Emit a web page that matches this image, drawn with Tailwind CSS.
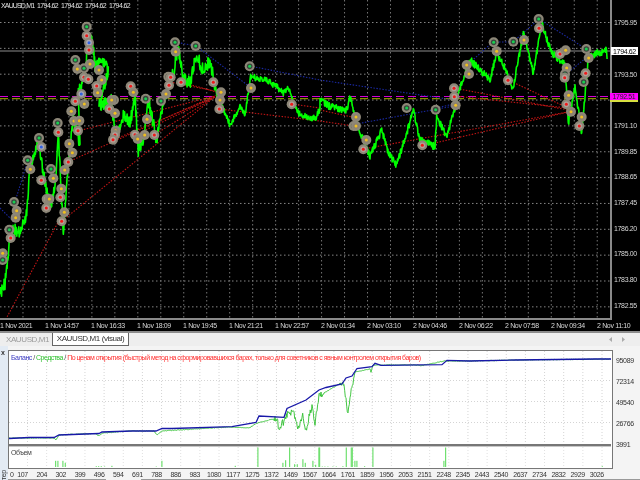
<!DOCTYPE html>
<html>
<head>
<meta charset="utf-8">
<script src="https://cdn.jsdelivr.net/npm/@tailwindcss/browser@4"></script>
</head>
<body class="m-0 bg-black">
<div class="w-[640px] h-[480px] overflow-hidden flex flex-col bg-white blur-[0.35px] font-['Liberation_Sans',sans-serif] text-[7px] tracking-[-0.35px] leading-none">

  <!-- price chart -->
  <div class="relative h-[331px] bg-black text-[#d8d8d8] shrink-0">
    <div class="flex h-[318px]">
      <svg id="chart" class="w-[610px] h-[318px] block shrink-0" viewBox="0 0 610 318"></svg>
      <div class="flex-1 border-l-2 border-[#8a8a8a] pl-[2px] pt-[10px] flex flex-col">
        <div class="h-[25.85px] flex items-center">1795.95</div>
        <div class="h-[25.85px]"></div>
        <div class="h-[25.85px] flex items-center">1793.50</div>
        <div class="h-[25.85px]"></div>
        <div class="h-[25.85px] flex items-center">1791.10</div>
        <div class="h-[25.85px] flex items-center">1789.85</div>
        <div class="h-[25.85px] flex items-center">1788.65</div>
        <div class="h-[25.85px] flex items-center">1787.45</div>
        <div class="h-[25.85px] flex items-center">1786.20</div>
        <div class="h-[25.85px] flex items-center">1785.00</div>
        <div class="h-[25.85px] flex items-center">1783.80</div>
        <div class="h-[25.85px] flex items-center">1782.55</div>
      </div>
    </div>
    <div class="h-[12px] border-t-2 border-[#8a8a8a] w-[612px] flex items-center whitespace-nowrap">
      <div class="w-[45px] shrink-0">1 Nov 2021</div>
      <div class="w-[46px] shrink-0">1 Nov 14:57</div>
      <div class="w-[46px] shrink-0">1 Nov 16:33</div>
      <div class="w-[46px] shrink-0">1 Nov 18:09</div>
      <div class="w-[46px] shrink-0">1 Nov 19:45</div>
      <div class="w-[46px] shrink-0">1 Nov 21:21</div>
      <div class="w-[46px] shrink-0">1 Nov 22:57</div>
      <div class="w-[46px] shrink-0">2 Nov 01:34</div>
      <div class="w-[46px] shrink-0">2 Nov 03:10</div>
      <div class="w-[46px] shrink-0">2 Nov 04:46</div>
      <div class="w-[46px] shrink-0">2 Nov 06:22</div>
      <div class="w-[46px] shrink-0">2 Nov 07:58</div>
      <div class="w-[46px] shrink-0">2 Nov 09:34</div>
      <div class="w-[46px] shrink-0">2 Nov 11:10</div>
    </div>
    <div class="absolute left-[1px] top-[2px] flex whitespace-nowrap text-[#e4e4e4] tracking-[-0.6px]">
      <span class="w-[36px] tracking-[-0.85px]">XAUUSD,M1</span>
      <span class="w-[24px]">1794.62</span>
      <span class="w-[24px]">1794.62</span>
      <span class="w-[24px]">1794.62</span>
      <span class="w-[24px]">1794.62</span>
    </div>
    <div class="absolute left-[611px] top-[47px] w-[27px] h-[8px] bg-white text-black flex items-center justify-center">1794.62</div>
    <div class="absolute left-[610px] top-[93px] w-[28px] h-[7px] bg-[#ff00ff] text-[#222] flex items-center justify-center">1792.51</div>
    <div class="absolute left-[610px] top-[100px] w-[28px] h-[2px] bg-[#d8e040]"></div>
  </div>

  <!-- divider + tabs -->
  <div class="h-[2px] bg-[#8c8c8c] shrink-0"></div>
  <div class="h-[13px] bg-[#eeeeee] shrink-0 flex items-stretch text-[8px] tracking-[-0.4px]">
    <div class="w-[52px] pl-[6px] flex items-center text-[#9a9a9a] whitespace-nowrap">XAUUSD,M1</div>
    <div class="w-[77px] bg-white border border-t-0 border-[#666] flex items-center justify-center text-[#333] whitespace-nowrap">XAUUSD,M1 (visual)</div>
    <div class="flex-1"></div>
    <div class="w-[33px] flex items-center gap-[8px] pl-[2px]">
      <svg class="w-[4px] h-[5px]" viewBox="0 0 4 5"><path d="M3 0 L0 2.5 L3 5 Z" fill="#aaa"/></svg>
      <svg class="w-[4px] h-[5px]" viewBox="0 0 4 5"><path d="M1 0 L4 2.5 L1 5 Z" fill="#aaa"/></svg>
    </div>
  </div>

  <!-- tester panel -->
  <div class="flex flex-1 min-h-0 bg-[#f4f4f4]">
    <div class="w-[8px] shrink-0 bg-[#e3ebf4] flex flex-col justify-between text-[#333] pt-[3px]">
      <div class="text-[7px] font-bold pl-[1px]">x</div>
      <div class="[writing-mode:vertical-rl] rotate-180 h-[11px]">тер</div>
    </div>
    <div class="flex-1 min-w-0 flex flex-col pt-[4px]">
      <div class="flex h-[119px] shrink-0">
        <div class="relative w-[605px] h-[119px] shrink-0 border-[1.5px] border-[#777] bg-white">
          <svg id="eq" class="block w-[602px] h-[116px]" viewBox="10 351 602 116"></svg>
          <div class="absolute left-[2px] top-[3px] whitespace-nowrap text-[7px] tracking-[-0.52px]"><span class="text-[#3a3ac0]">Баланс</span><span class="text-[#444]"> / </span><span class="text-[#30c030]">Средства</span><span class="text-[#444]"> / </span><span class="text-[#ff3030]">По ценам открытия (быстрый метод на сформировавшихся барах, только для советников с явным контролем открытия баров)</span></div>
          <div class="absolute left-[2px] top-[98px] text-[#444]">Объем</div>
        </div>
        <div class="relative flex-1 text-[#333]">
          <div class="absolute left-[3px] top-[7px]">95089</div>
          <div class="absolute left-[3px] top-[28px]">72314</div>
          <div class="absolute left-[3px] top-[49px]">49540</div>
          <div class="absolute left-[3px] top-[70px]">26766</div>
          <div class="absolute left-[3px] top-[91px]">3991</div>
        </div>
      </div>
      <div class="h-[10px] flex items-center text-[#333] whitespace-nowrap">
        <div class="w-[5px] shrink-0 pl-[2px]">0</div>
        <div class="w-[19.15px] shrink-0 text-center">107</div>
        <div class="w-[19.15px] shrink-0 text-center">204</div>
        <div class="w-[19.15px] shrink-0 text-center">302</div>
        <div class="w-[19.15px] shrink-0 text-center">399</div>
        <div class="w-[19.15px] shrink-0 text-center">496</div>
        <div class="w-[19.15px] shrink-0 text-center">594</div>
        <div class="w-[19.15px] shrink-0 text-center">691</div>
        <div class="w-[19.15px] shrink-0 text-center">788</div>
        <div class="w-[19.15px] shrink-0 text-center">886</div>
        <div class="w-[19.15px] shrink-0 text-center">983</div>
        <div class="w-[19.15px] shrink-0 text-center">1080</div>
        <div class="w-[19.15px] shrink-0 text-center">1177</div>
        <div class="w-[19.15px] shrink-0 text-center">1275</div>
        <div class="w-[19.15px] shrink-0 text-center">1372</div>
        <div class="w-[19.15px] shrink-0 text-center">1469</div>
        <div class="w-[19.15px] shrink-0 text-center">1567</div>
        <div class="w-[19.15px] shrink-0 text-center">1664</div>
        <div class="w-[19.15px] shrink-0 text-center">1761</div>
        <div class="w-[19.15px] shrink-0 text-center">1859</div>
        <div class="w-[19.15px] shrink-0 text-center">1956</div>
        <div class="w-[19.15px] shrink-0 text-center">2053</div>
        <div class="w-[19.15px] shrink-0 text-center">2151</div>
        <div class="w-[19.15px] shrink-0 text-center">2248</div>
        <div class="w-[19.15px] shrink-0 text-center">2345</div>
        <div class="w-[19.15px] shrink-0 text-center">2443</div>
        <div class="w-[19.15px] shrink-0 text-center">2540</div>
        <div class="w-[19.15px] shrink-0 text-center">2637</div>
        <div class="w-[19.15px] shrink-0 text-center">2734</div>
        <div class="w-[19.15px] shrink-0 text-center">2832</div>
        <div class="w-[19.15px] shrink-0 text-center">2929</div>
        <div class="w-[19.15px] shrink-0 text-center">3026</div>
      </div>
      <div class="flex h-px">
        <div class="w-[98px] bg-[#999]"></div>
        <div class="w-[35px]"></div>
        <div class="flex-1 bg-[#999]"></div>
      </div>
    </div>
  </div>
</div>

<script>
(function(){
  var seed=12345;
  function R(){seed=(seed*1664525+1013904223)%4294967296;return seed/4294967296;}
  var s='';
  var i,j;
  for(i=0;i<12;i++){var y=22.5+25.85*i;s+='<line x1="0" x2="610" y1="'+y+'" y2="'+y+'" stroke="#858585" stroke-width="1" stroke-dasharray="1.5 2.5"/>';}
  for(i=1;i<27;i++){var x=22.97*i;s+='<line y1="0" y2="318" x1="'+x+'" x2="'+x+'" stroke="#757575" stroke-width="1" stroke-dasharray="1.5 2.5"/>';}
  s+='<line x1="0" x2="610" y1="51" y2="51" stroke="#8c8c8c" stroke-width="1"/>';
  s+='<line x1="0" x2="610" y1="96.5" y2="96.5" stroke="#d400d4" stroke-width="1.2" stroke-dasharray="8 4"/>';
  s+='<line x1="0" x2="610" y1="98.7" y2="98.7" stroke="#a8b000" stroke-width="1" stroke-dasharray="8 4"/>';
  var red=[[0,330,62,215],[62,221,217,95],[68,162,217,95],[78,131,215,96],[113,140,215,97],[135,135,215,97],[154,135,215,97],[181,82,220,93],[170,82,220,92],[219,109,320,121],[292,104,320,108],[320,110,352,117],[320,121,354,126],[363,149,568,112],[422,146,568,112],[454,88,568,110],[454,96,568,108],[508,80,568,108]];
  var blue=[[0,208,14,222],[14,205,28,160],[175,42,196,46],[196,46,250,87],[250,66,320,80],[320,80,454,100],[356,124,454,106],[436,108,454,104],[467,65,493,42],[493,42,513,42],[513,42,539,19],[539,19,586,49],[566,74,586,58]];
  red.forEach(function(l){s+='<line x1="'+l[0]+'" y1="'+l[1]+'" x2="'+l[2]+'" y2="'+l[3]+'" stroke="#c01414" stroke-width="1.1" stroke-dasharray="1.5 1.5"/>';});
  blue.forEach(function(l){s+='<line x1="'+l[0]+'" y1="'+l[1]+'" x2="'+l[2]+'" y2="'+l[3]+'" stroke="#1a28a0" stroke-width="1.1" stroke-dasharray="1.5 1.5"/>';});
  var L=[[0,885],[6,870],[15,850],[30,700],[48,690],[60,695],[80,640],[90,500],[105,450],[115,420],[130,520],[150,620],[165,560],[175,400],[190,700],[205,490],[220,360],[240,440],[235,280],[255,220],[265,110],[275,100],[285,200],[305,180],[325,210],[297,320],[335,300],[345,410],[370,350],[390,370],[405,290],[415,450],[430,420],[445,300],[470,420],[490,300],[520,220],[535,140],[548,230],[570,250],[590,160],[605,210],[630,185],[650,280],[690,375],[720,320],[735,345],[752,230],[800,240],[830,260],[850,280],[865,260],[880,310],[900,345],[945,355],[960,330]];
  var Rg=[[0,300],[30,320],[80,330],[90,290],[110,370],[150,470],[185,390],[205,460],[230,495],[260,400],[280,330],[300,420],[345,440],[350,350],[380,410],[400,340],[415,280],[450,180],[510,240],[530,160],[560,215],[578,270],[610,100],[640,220],[665,70],[695,160],[735,190],[745,370],[765,260],[785,400],[805,170],[830,160],[860,150],[862,190]];
  var pts=L.map(function(p){return [p[0]/3,p[1]/3];}).concat(Rg.map(function(p){return [p[0]/3+320,p[1]/3];}));
  var d='';
  for(i=0;i<pts.length-1;i++){
    var a=pts[i],b=pts[i+1],n=Math.max(3,Math.round(Math.abs(b[0]-a[0])*2.4));
    for(j=0;j<n;j++){
      var t=j/n,xx=a[0]+(b[0]-a[0])*t;
      var amp=xx<215?13:(xx<315?6:7);
      var yy=a[1]+(b[1]-a[1])*t+(R()-0.5)*amp;
      d+=(d?'L':'M')+xx.toFixed(1)+' '+yy.toFixed(1);
    }
  }
  s+='<path d="'+d+'" fill="none" stroke="#00ff00" stroke-width="1.6" stroke-linejoin="round"/>';
  var M1=[[260,80,'g'],[260,107,'r'],[267,128,'b'],[267,150,'r'],[226,180,'g'],[232,207,'y'],[252,205,'g'],[270,192,'y'],[297,210,'y'],[252,232,'r'],[265,238,'r'],[305,240,'y'],[290,258,'r'],[293,278,'y'],[244,282,'b'],[226,304,'r'],[253,312,'y'],[214,334,'y'],[222,363,'y'],[238,362,'y'],[234,392,'r'],[173,369,'g'],[175,397,'r'],[117,414,'g'],[124,441,'b'],[83,481,'g'],[91,508,'y'],[124,541,'r'],[153,507,'g'],[160,535,'y'],[208,431,'y'],[217,458,'y'],[205,486,'r'],[194,510,'y'],[184,566,'y'],[181,592,'r'],[140,597,'r'],[148,597,'y'],[139,624,'r'],[193,637,'y'],[185,664,'r'],[42,606,'g'],[50,632,'y'],[47,653,'y'],[28,689,'g'],[32,714,'r'],[8,760,'y'],[8,780,'g'],[525,127,'g'],[527,155,'y'],[587,138,'g'],[505,230,'g'],[512,232,'r'],[507,256,'r'],[498,282,'y'],[483,303,'g'],[543,247,'r'],[640,247,'r'],[663,277,'y'],[660,300,'y'],[658,327,'r'],[749,199,'g'],[753,264,'y'],[875,313,'r'],[392,259,'r'],[400,277,'y'],[342,300,'g'],[335,300,'y'],[437,296,'g'],[328,327,'r'],[345,340,'y'],[441,358,'y'],[347,392,'y'],[345,405,'r'],[339,419,'r'],[405,404,'r'],[413,417,'y'],[434,405,'y'],[463,405,'r']];
  var M2=[[108,351,'y'],[101,378,'g'],[108,378,'y'],[139,420,'y'],[130,448,'r'],[260,324,'g'],[347,329,'g'],[307,436,'r'],[402,265,'r'],[403,290,'r'],[407,316,'y'],[440,195,'y'],[447,222,'y'],[521,127,'g'],[530,154,'y'],[580,125,'g'],[612,120,'y'],[564,241,'r'],[656,57,'g'],[657,85,'r'],[720,162,'r'],[737,151,'y'],[740,204,'y'],[735,222,'g'],[734,233,'r'],[746,286,'y'],[739,313,'r'],[753,335,'y'],[785,351,'y'],[778,378,'r'],[799,147,'g'],[806,174,'y'],[797,220,'r'],[791,246,'g']];
  function mark(x,y,k){
    var inner={g:'#3a463c',r:'#b0a098',y:'#8a8070',b:'#a8a8b8'}[k];
    var c={g:'#18d050',r:'#f01818',y:'#f0c020',b:'#3060e0'}[k];
    return '<circle cx="'+x+'" cy="'+y+'" r="5" fill="#8d8778"/><circle cx="'+x+'" cy="'+y+'" r="2.8" fill="'+inner+'"/><circle cx="'+x+'" cy="'+y+'" r="1.5" fill="'+c+'"/>';
  }
  M1.forEach(function(m){s+=mark(m[0]/3,m[1]/3,m[2]);});
  M2.forEach(function(m){s+=mark(m[0]/3+320,m[1]/3,m[2]);});
  document.getElementById('chart').innerHTML=s;

  var e='';
  for(i=0;i<31;i++){var gx=28.5+19.15*i;e+='<line x1="'+gx+'" x2="'+gx+'" y1="351" y2="444" stroke="#d4d4d4" stroke-dasharray="1 2"/><line x1="'+gx+'" x2="'+gx+'" y1="447" y2="467" stroke="#e0e0e0" stroke-dasharray="1 2"/>';}
  [380.5,401.5,422.5].forEach(function(y){e+='<line x1="10" x2="612" y1="'+y+'" y2="'+y+'" stroke="#d4d4d4" stroke-dasharray="1 2"/>';});
  e+='<rect x="10" y="444" width="602" height="2.4" fill="#777"/>';
  var V=[[168,20],[175,20],[190,20],[197,14],[290,4],[297,4],[305,4],[315,3],[337,5],[487,20],[470,3],[707,5],[775,60],[850,14],[858,22],[870,60],[885,10],[893,10],[910,25],[917,14],[940,20],[948,8],[958,60]];
  V.forEach(function(v){e+='<rect x="'+(v[0]/3).toFixed(1)+'" y="'+(467.5-v[1]/3).toFixed(1)+'" width="1.2" height="'+(v[1]/3).toFixed(1)+'" fill="#70e070"/>';});
  var V2=[[0,60],[8,3],[16,3],[25,3],[40,3],[50,3],[70,4],[80,60],[95,60],[98,60],[106,20],[112,20],[135,4],[160,60],[373,20],[378,60],[848,4]];
  V2.forEach(function(v){e+='<rect x="'+(320+v[0]/3).toFixed(1)+'" y="'+(467.5-v[1]/3).toFixed(1)+'" width="1.2" height="'+(v[1]/3).toFixed(1)+'" fill="#70e070"/>';});
  var E=[[10,438],[55,438],[57,440],[60,435],[66,434.5],[97,433.5],[99,436],[104,433],[130,431],[155,431],[158,435],[163,431],[230,427],[250,428],[258,423],[262,422],[278,418],[280,430],[283,424],[288,415],[293,412],[297,418],[300,431],[303,414],[305,420],[307,432],[310,418],[313,405],[316,425],[318,410],[320,396],[340,384],[345,384],[347,400],[349,415],[351,396],[354,383],[356,372],[371,369],[372,372],[374,365],[400,365],[420,365],[421,366],[445,361],[470,361],[520,360],[612,359]];
  var Ed='';
  for(i=0;i<E.length-1;i++){
    var p=E[i],q=E[i+1],m=Math.max(1,Math.round((q[0]-p[0])*1.5));
    for(j=0;j<m;j++){
      var u=j/m,ex=p[0]+(q[0]-p[0])*u,na=(ex>275&&ex<325)?8:(ex>340&&ex<355?5:0.6);
      Ed+=(Ed?'L':'M')+ex.toFixed(1)+' '+(p[1]+(q[1]-p[1])*u+(R()-0.5)*na).toFixed(1);
    }
  }
  e+='<path d="'+Ed+'" fill="none" stroke="#2fc02f" stroke-width="0.9"/>';
  var B=[[10,438.5],[30,437.5],[55,437.5],[60,435],[100,433.5],[103,432],[133,431],[157,431],[163,428.5],[173,428.5],[233,426.7],[257,422.5],[260,416],[285,417.3],[288,408.5],[307,400],[320,390],[327,387.5],[343,384],[347,378],[353,376],[358,368.5],[373,366.7],[376,363.3],[382,365.3],[443,364.7],[448,360.3],[470,361],[517,360],[597,359],[612,359]];
  var Bd=B.map(function(p,k){return (k?'L':'M')+p[0]+' '+p[1];}).join('');
  e+='<path d="'+Bd+'" fill="none" stroke="#1818a8" stroke-width="1.3"/>';
  document.getElementById('eq').innerHTML=e;
})();
</script>
</body>
</html>
